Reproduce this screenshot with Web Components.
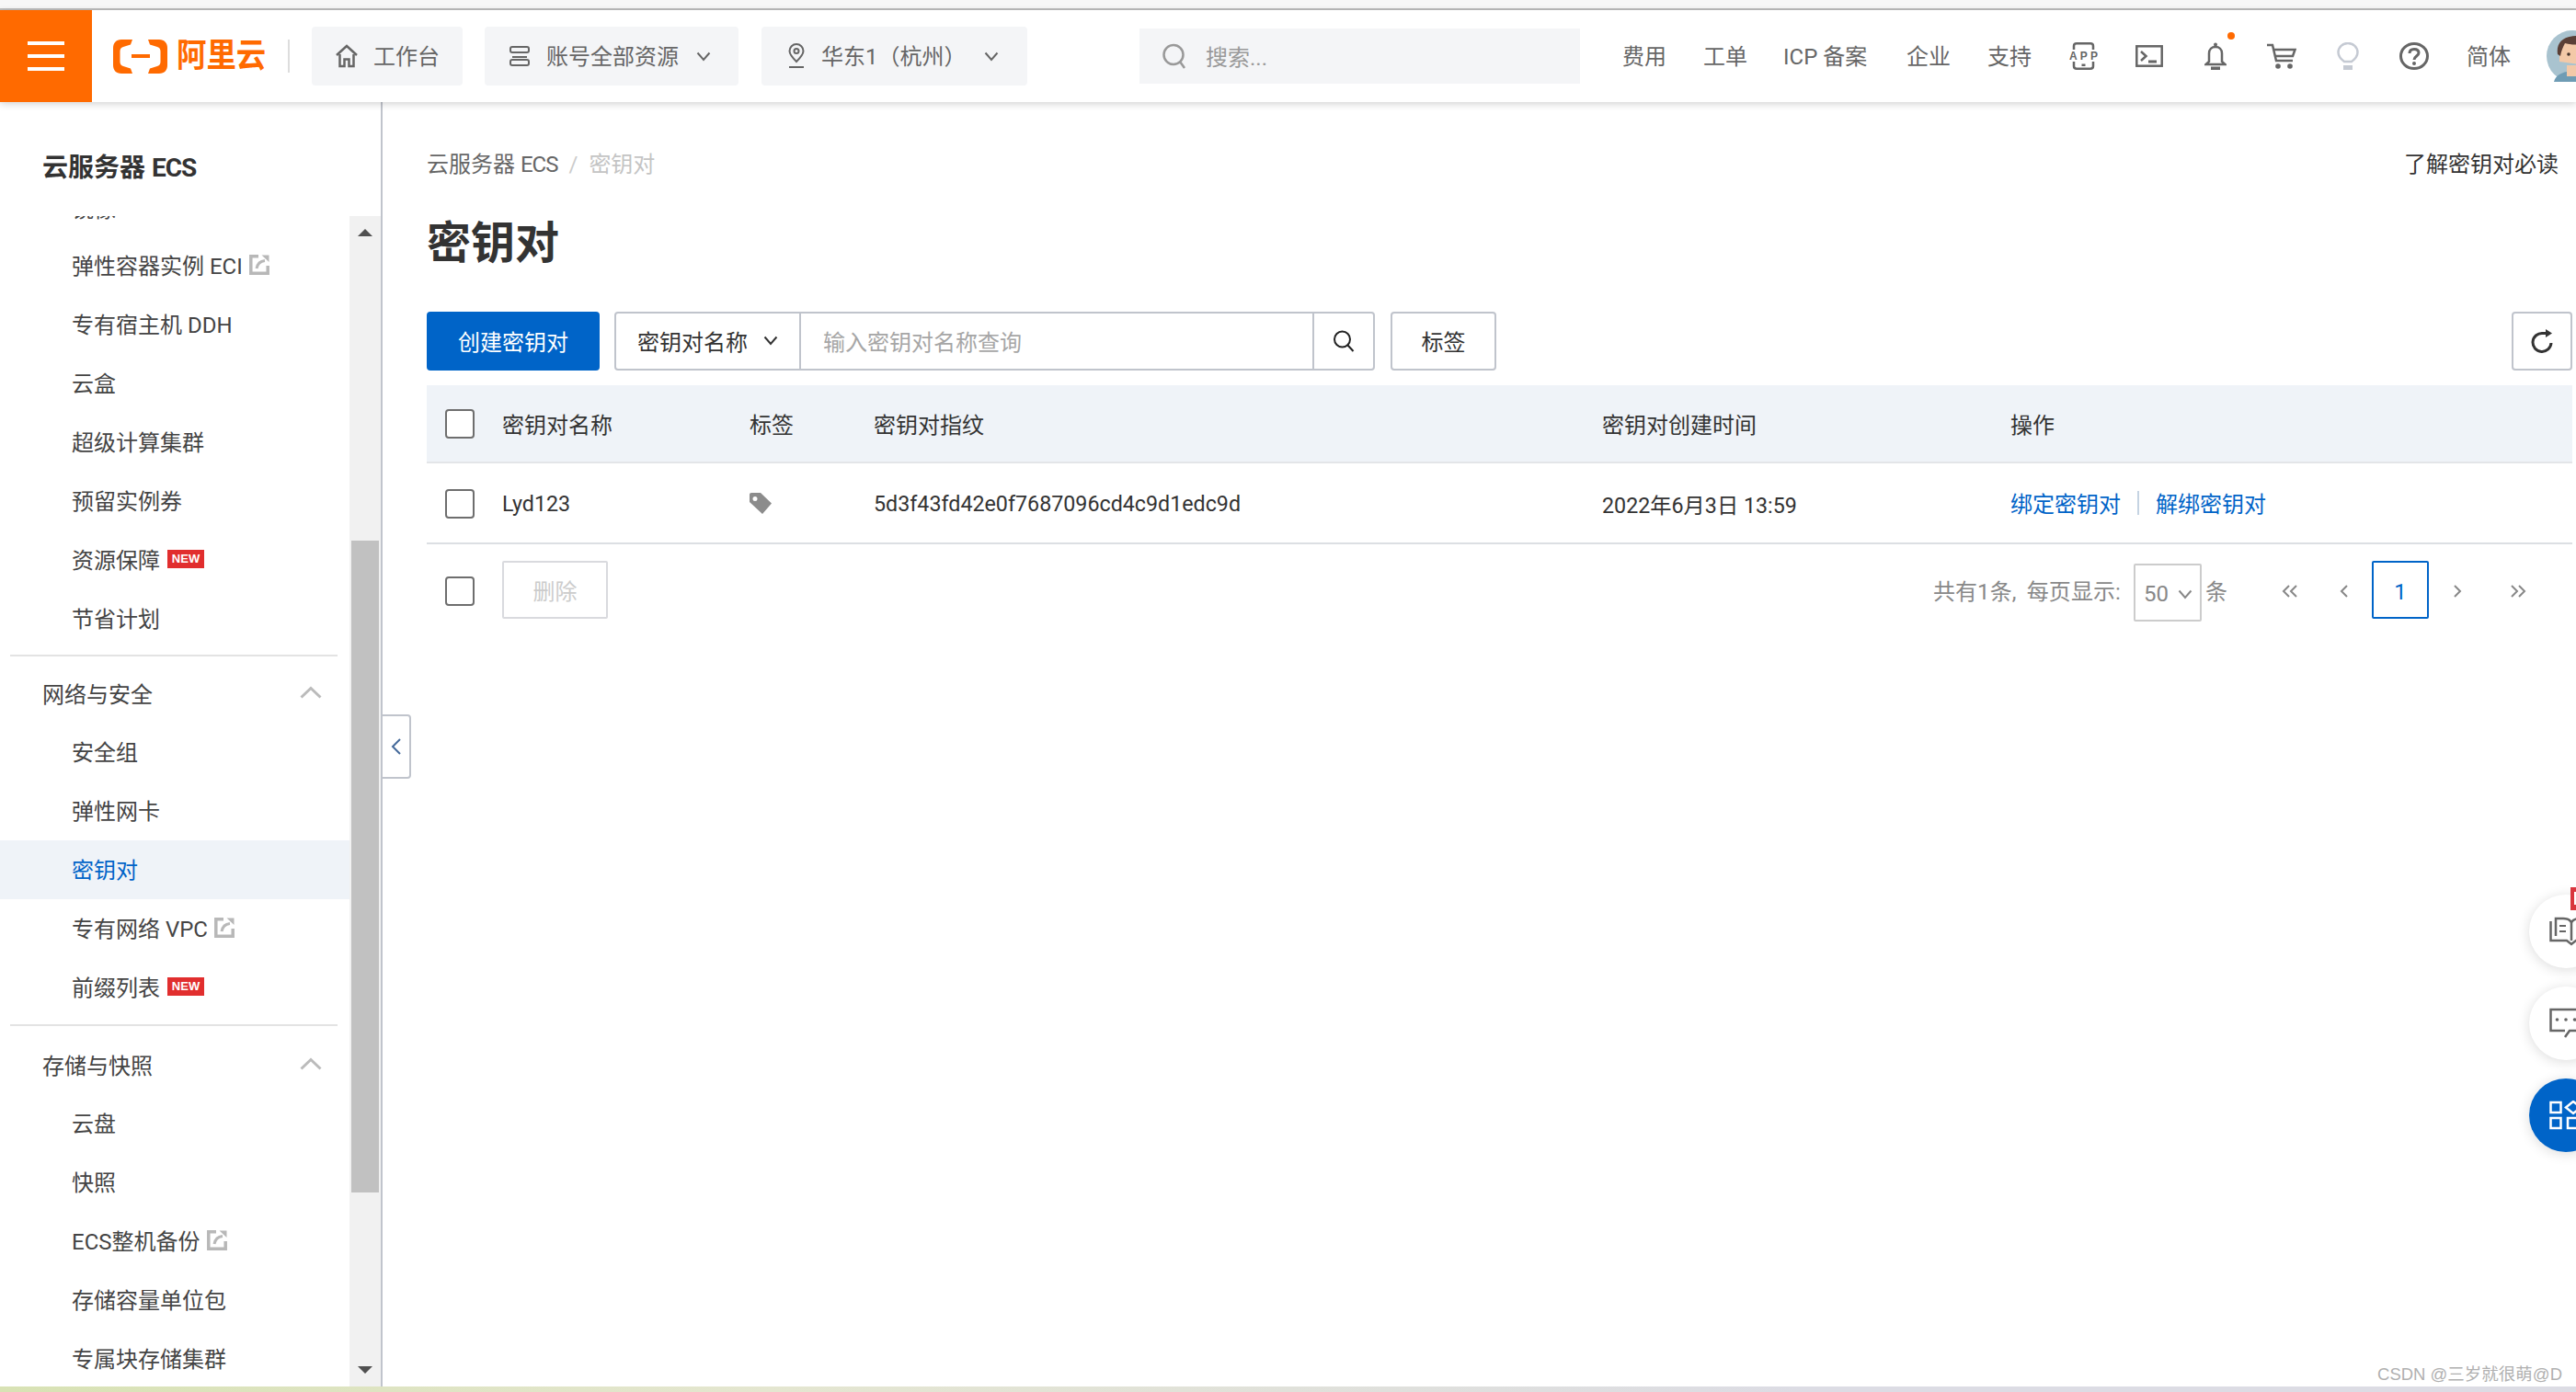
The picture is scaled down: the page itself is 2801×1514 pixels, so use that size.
<!DOCTYPE html>
<html lang="zh">
<head>
<meta charset="utf-8">
<title>密钥对</title>
<style>
  html, body { margin: 0; height: 100%; overflow: hidden; background: #fff; }
  body { font: 24px Roboto, "Noto Sans CJK SC", sans-serif; color: #333; display: flex; flex-direction: column; }
  .top-strip { flex: none; height: 9px; background: #f7f7f7; border-bottom: 2px solid #bdbdbd; }
  .shell { flex: 1; min-height: 0; display: flex; position: relative; }
  .bottom-strip { flex: none; height: 6px; background: linear-gradient(90deg, #d8e2b4, #e4e6d0 30%, #dcdce4 70%); }
</style>
</head>
<body>
<div class="top-strip"></div>
<ali-header></ali-header>
<div class="shell">
  <side-menu></side-menu>
  <collapse-handle></collapse-handle>
  <key-page></key-page>
  <float-tools></float-tools>
  <water-mark>CSDN @三岁就很萌@D</water-mark>
</div>
<div class="bottom-strip"></div>

<script>
// icons, all hand drawn to fit the reference
const icons = {
  logo: `<svg width="59" height="37" viewBox="0 0 59 37" fill="#ff6a00"><path d="M21 0H9C3 0 0 4 0 9V28C0 33 3 37 9 37H21L19 31.500 11 29C8.500 28.300 7.500 26.500 7.500 24V13C7.500 10.500 8.500 8.700 11 8L19 5.500Z"/><path d="M38 0H50C56 0 59 4 59 9V28C59 33 56 37 50 37H38L40 31.500 48 29C50.500 28.300 51.500 26.500 51.500 24V13C51.500 10.500 50.500 8.700 48 8L40 5.500Z"/><rect x="20" y="16" width="20" height="4"/></svg>`,
  home: `<svg width="24" height="26" viewBox="0 0 24 26" fill="none" stroke="#666" stroke-width="2.500"><path d="M1 12 12 2 23 12"/><path d="M4.500 11V24H9.500V16.500H14.500V24H19.500V11"/></svg>`,
  stack: `<svg width="22" height="24" viewBox="0 0 22 24" fill="none" stroke="#666" stroke-width="2"><rect x="1" y="2" width="20" height="6" rx="2"/><path d="M3 13H19"/><rect x="1" y="16" width="20" height="6" rx="2"/></svg>`,
  pin: `<svg width="20" height="28" viewBox="0 0 20 28" fill="none" stroke="#666" stroke-width="2"><path d="M10 20C5 15 2.500 12 2.500 8.500A7.500 7.500 0 0 1 17.500 8.500C17.500 12 15 15 10 20Z"/><circle cx="10" cy="8.500" r="2.500"/><path d="M2 26H18"/></svg>`,
  chev: `<svg width="16" height="11" viewBox="0 0 16 11" fill="none" stroke="#666" stroke-width="2"><path d="M1.500 1.500 8 9 14.500 1.500"/></svg>`,
  search: `<svg width="26" height="28" viewBox="0 0 26 28" fill="none" stroke="#999" stroke-width="2.500"><circle cx="12" cy="12.500" r="10.500"/><path d="M19 20 24 27"/></svg>`,
  app: `<svg width="31" height="30" viewBox="0 0 31 30" fill="none" stroke="#666" stroke-width="2.500"><path d="M5 8V4C5 2 6 1.300 8 1.300H23C25 1.300 26 2 26 4V8M5 21V26C5 28 6 28.700 8 28.700H23C25 28.700 26 28 26 26V21"/><rect x="13.500" y="23.500" width="4" height="2.500" fill="#666" stroke="none"/><text x="0" y="19" font-family="Liberation Sans" font-weight="700" font-size="12" fill="#666" stroke="none" textLength="31">APP</text></svg>`,
  term: `<svg width="30" height="24" viewBox="0 0 30 24" fill="none" stroke="#666" stroke-width="2.500"><rect x="1.300" y="1.300" width="27.400" height="21.400"/><path d="M6 7 11.500 12 6 17"/><path d="M14 18H23" stroke-width="3"/></svg>`,
  bell: `<svg width="24" height="30" viewBox="0 0 24 30" fill="none" stroke="#666" stroke-width="2.500"><circle cx="12" cy="2.500" r="2" fill="#666" stroke="none"/><path d="M5 21V12C5 7.500 8 5 12 5S19 7.500 19 12V21L22.500 24H1.500Z"/><rect x="7" y="26.500" width="10" height="3.500" fill="#666" stroke="none"/></svg>`,
  cart: `<svg width="32" height="28" viewBox="0 0 32 28" fill="none" stroke="#666" stroke-width="2.500"><path d="M0 2H6L10 19H28"/><path d="M7 7H30.500L28 14H9" /><circle cx="12" cy="25" r="2.800" fill="#666" stroke="none"/><circle cx="25" cy="25" r="2.800" fill="#666" stroke="none"/></svg>`,
  bulb: `<svg width="24" height="30" viewBox="0 0 24 30" fill="none" stroke="#c5cad3" stroke-width="2.500"><path d="M8 21C4 18 1.500 15 1.500 11A10.500 10 0 0 1 22.500 11C22.500 15 20 18 16 21Z"/><rect x="7" y="25" width="10" height="5" fill="#c5cad3" stroke="none"/></svg>`,
  help: `<svg width="32" height="30" viewBox="0 0 32 30" fill="none" stroke="#666" stroke-width="3"><ellipse cx="16" cy="15" rx="14.500" ry="13.500"/><path d="M11 12C11 9 13 7.500 16 7.500S21 9 21 11.500C21 15 16 15 16 19" stroke-width="3"/><circle cx="16" cy="23" r="2" fill="#666" stroke="none"/></svg>`,
  avatar: `<svg width="56" height="56" viewBox="0 0 56 56"><circle cx="28" cy="28" r="28" fill="#a9c3cf"/><path d="M8 56C10 48 18 44 34 44S56 50 56 56Z" fill="#6f9cb4"/><path d="M14 20C14 10 22 7 34 7S56 12 56 24V40L14 34Z" fill="#f3c9a8"/><path d="M12 26C10 12 20 6 34 6S56 10 56 16V17C44 16 28 16 20 14C18 18 16 22 15 28Z" fill="#5a3f36"/><path d="M22 38H56V50H22Z" fill="#f3c9a8"/><circle cx="24" cy="26" r="1.800" fill="#44332c"/></svg>`,
  ext: `<svg width="22" height="22" viewBox="0 0 22 22" fill="none" stroke="#b8b8b8" stroke-width="3.500"><path d="M10 1.800H1.800V20.200H20.200V12"/><path d="M8 15C9 9.500 12 7 17 6.500" stroke-width="3"/><path d="M13.500 .5H21.500V8Z" fill="#b8b8b8" stroke="none"/></svg>`,
  up: `<svg width="24" height="14" viewBox="0 0 24 14" fill="none" stroke="#bbb" stroke-width="3"><path d="M1.500 12.500 12 2.500 22.500 12.500"/></svg>`,
  refresh: `<svg width="26" height="26" viewBox="0 0 26 26" fill="none" stroke="#333" stroke-width="3"><path d="M23 15A10 10 0 1 1 14 4.500H19"/><path d="M17 0 24 4.500 17 9Z" fill="#333" stroke="none"/></svg>`,
  lens: `<svg width="24" height="26" viewBox="0 0 24 26" fill="none" stroke="#222" stroke-width="2"><circle cx="10.500" cy="11" r="8.500"/><path d="M16.500 17.500 22.500 24"/></svg>`,
  tag: `<svg width="24" height="23" viewBox="0 0 24 23" fill="#8c8c8c"><path d="M0 2C0 .8 .8 0 2 0H12L24 11.500 14 23 0 10ZM6 4A2.500 2.500 0 1 0 6 9 2.500 2.500 0 1 0 6 4Z" fill-rule="evenodd"/></svg>`,
  book: `<svg width="46" height="32" viewBox="0 0 46 32" fill="none" stroke="#666" stroke-width="2.500"><path d="M1.500 5V26H19L24 30 29 26H46"/><path d="M7 21V2H15C19 2 22 3 24 6C26 3 29 2 33 2H46"/><path d="M24 6V26"/><path d="M11 10H18M11 16H18" stroke-width="2"/></svg>`,
  chat: `<svg width="46" height="34" viewBox="0 0 46 34" fill="none" stroke="#666" stroke-width="2.500"><path d="M46 2H1.500V25H17M30 25H22L17 32"/><circle cx="8.500" cy="13" r="1.800" fill="#666" stroke="none"/><circle cx="18" cy="13" r="1.800" fill="#666" stroke="none"/><circle cx="27.500" cy="13" r="1.800" fill="#666" stroke="none"/></svg>`,
  grid: `<svg width="40" height="32" viewBox="0 0 40 32" fill="none" stroke="#fff" stroke-width="2.500"><rect x="1.500" y="2" width="11" height="11"/><rect x="1.500" y="19" width="11" height="11"/><rect x="20" y="19" width="11" height="11"/><path d="M26 1 18 7.500 26 14 34 7.500Z"/></svg>`,
  first: `<svg width="18" height="14" viewBox="0 0 18 14" fill="none" stroke="#888" stroke-width="2"><path d="M8 1 2 7 8 13M16 1 10 7 16 13"/></svg>`,
  prev: `<svg width="10" height="14" viewBox="0 0 10 14" fill="none" stroke="#888" stroke-width="2"><path d="M8 1 2 7 8 13"/></svg>`,
  next: `<svg width="10" height="14" viewBox="0 0 10 14" fill="none" stroke="#888" stroke-width="2"><path d="M2 1 8 7 2 13"/></svg>`,
  last: `<svg width="18" height="14" viewBox="0 0 18 14" fill="none" stroke="#888" stroke-width="2"><path d="M2 1 8 7 2 13M10 1 16 7 10 13"/></svg>`
};

class AliHeader extends HTMLElement {
  constructor() {
    super();
    const shadow = this.attachShadow({mode: 'open'});
    shadow.innerHTML = `
      <style>
        :host { display: flex; flex: none; height: 100px; align-items: center; background: #fff; position: relative; z-index: 2;
                box-shadow: 0 2px 8px rgba(0,0,0,.18); overflow: visible; color: #666; white-space: nowrap; }
        .burger { flex: none; width: 100px; height: 100px; background: #ff6a00; display: flex; flex-direction: column; align-items: center; justify-content: center; gap: 10px; }
        .burger i { display: block; width: 40px; height: 4px; background: #fff; }
        .logo { flex: none; margin-left: 23px; display: flex; }
        .brand { flex: none; margin-left: 10px; width: 96px; font-size: 36px; line-height: 40px; font-weight: 700; color: #ff6a00; transform: scaleX(.9); transform-origin: left center; }
        .split { flex: none; margin-left: 25px; width: 2px; height: 36px; background: #ddd; }
        .find { flex: none; margin-left: 122px; width: 479px; height: 60px; background: #f4f5f7; display: flex; align-items: center; padding-left: 25px; gap: 21px; box-sizing: border-box; color: #999; }
        .find span { padding-bottom: 2px; }
        .n { flex: none; display: flex; align-items: center; }
        .t { padding-bottom: 3px; }
        .avatar { flex: none; margin-left: 39px; height: 56px; width: 32px; overflow: hidden; }
        .dot { position: absolute; left: 2422px; top: 24px; width: 8px; height: 8px; border-radius: 50%; background: #ff6a00; }
      </style>
      <div class="burger"><i></i><i></i><i></i></div>
      <span class="logo">${icons.logo}</span>
      <span class="brand">阿里云</span>
      <span class="split"></span>
      <nav-chip icon="home" width="164" pad="26" gap="17" style="margin-left:24px">工作台</nav-chip>
      <nav-chip icon="stack" width="276" pad="27" gap="18" chev="30" style="margin-left:24px">账号全部资源</nav-chip>
      <nav-chip icon="pin" width="289" pad="28" gap="17" chev="31" style="margin-left:25px">华东1（杭州）</nav-chip>
      <div class="find">${icons.search}<span>搜索...</span></div>
      <span class="n t" style="margin-left:46px">费用</span>
      <span class="n t" style="margin-left:40px">工单</span>
      <span class="n t" style="margin-left:39px;width:95px">ICP 备案</span>
      <span class="n t" style="margin-left:39px">企业</span>
      <span class="n t" style="margin-left:40px">支持</span>
      <span class="n" style="margin-left:41px">${icons.app}</span>
      <span class="n" style="margin-left:41px">${icons.term}</span>
      <span class="n" style="margin-left:45px">${icons.bell}</span>
      <span class="n" style="margin-left:44px">${icons.cart}</span>
      <span class="n" style="margin-left:44px">${icons.bulb}</span>
      <span class="n" style="margin-left:44px">${icons.help}</span>
      <span class="n t" style="margin-left:41px">简体</span>
      <span class="avatar">${icons.avatar}</span>
      <span class="dot"></span>
    `;
  }
}

// chip of the top bar: icon, label, optional chevron
class NavChip extends HTMLElement {
  constructor() {
    super();
    this.attachShadow({mode: 'open'});
  }
  connectedCallback() {
    const chev = this.getAttribute('chev');
    this.shadowRoot.innerHTML = `
      <style>
        :host { display: flex; flex: none; align-items: center; box-sizing: border-box; height: 64px; border-radius: 4px; background: #f4f5f7; color: #666;
                width: ${this.getAttribute('width')}px; padding-left: ${this.getAttribute('pad')}px; }
        .i { display: flex; margin-right: ${this.getAttribute('gap')}px; }
        .l { padding-bottom: 3px; }
        .c { display: flex; margin-left: auto; margin-right: ${chev || 0}px; }
      </style>
      <span class="i">${icons[this.getAttribute('icon')]}</span><span class="l"><slot></slot></span>
      ${chev ? `<span class="c">${icons.chev}</span>` : ''}
    `;
  }
}

class SideItem extends HTMLElement {
  constructor() {
    super();
    this.attachShadow({mode: 'open'});
  }
  connectedCallback() {
    const active = this.hasAttribute('active');
    this.shadowRoot.innerHTML = `
      <style>
        :host { display: flex; align-items: center; box-sizing: border-box; height: 64px; padding: 0 0 3px 78px; white-space: nowrap; color: ${active ? '#0064c8' : '#444'}; background: ${active ? '#eff3f8' : 'none'}; }
        .ext { display: flex; margin-left: 7px; }
        .new { margin-left: 8px; width: 40px; height: 20px; background: #e12e2e; color: #fff; font: 700 13px/20px "Liberation Sans", sans-serif; text-align: center; }
      </style>
      <slot></slot>
      ${this.hasAttribute('ext') ? `<span class="ext">${icons.ext}</span>` : ''}
      ${this.hasAttribute('new') ? `<span class="new">NEW</span>` : ''}
    `;
  }
}

class SideGroup extends HTMLElement {
  constructor() {
    super();
    const shadow = this.attachShadow({mode: 'open'});
    shadow.innerHTML = `
      <style>
        :host { display: flex; align-items: center; box-sizing: border-box; height: 64px; padding: 0 30px 2px 46px; justify-content: space-between; color: #444; }
        span { display: flex; }
      </style>
      <slot></slot><span>${icons.up}</span>
    `;
  }
}

class SideMenu extends HTMLElement {
  constructor() {
    super();
    const shadow = this.attachShadow({mode: 'open'});
    shadow.innerHTML = `
      <style>
        :host { display: flex; flex-direction: column; flex: none; width: 416px; box-sizing: border-box; border-right: 2px solid #c0c4cc; height: 100%; }
        .head { flex: none; height: 124px; box-sizing: border-box; padding: 52px 0 0 46px; font-size: 28px; line-height: 40px; font-weight: 700; color: #333; }
        .head span { letter-spacing: -1px; }
        .body { flex: 1; min-height: 0; display: flex; overflow: hidden; }
        .list { flex: none; width: 380px; margin-top: -42px; }
        .list > side-item:first-child { padding-bottom: 0; }
        .rule { height: 2px; margin: 7px 13px 8px 11px; background: #e3e3e3; }
        .rule.b { margin: 8px 13px 10px 11px; }
        .bar { flex: none; width: 34px; background: #f1f1f1; display: flex; flex-direction: column; align-items: center; position: relative; }
        .thumb { position: absolute; left: 2px; top: 353px; width: 30px; height: 709px; background: #c1c1c1; }
        .up, .down { position: absolute; left: 9px; width: 0; height: 0; border-left: 8px solid transparent; border-right: 8px solid transparent; }
        .up { top: 14px; border-bottom: 8px solid #505050; }
        .down { bottom: 14px; border-top: 8px solid #505050; }
      </style>
      <div class="head">云服务器 <span>ECS</span></div>
      <div class="body">
        <div class="list">
          <side-item>镜像</side-item>
          <side-item ext>弹性容器实例 ECI</side-item>
          <side-item>专有宿主机 DDH</side-item>
          <side-item>云盒</side-item>
          <side-item>超级计算集群</side-item>
          <side-item>预留实例券</side-item>
          <side-item new>资源保障</side-item>
          <side-item>节省计划</side-item>
          <div class="rule"></div>
          <side-group>网络与安全</side-group>
          <side-item>安全组</side-item>
          <side-item>弹性网卡</side-item>
          <side-item active>密钥对</side-item>
          <side-item ext>专有网络 VPC</side-item>
          <side-item new>前缀列表</side-item>
          <div class="rule b"></div>
          <side-group>存储与快照</side-group>
          <side-item>云盘</side-item>
          <side-item>快照</side-item>
          <side-item ext>ECS整机备份</side-item>
          <side-item>存储容量单位包</side-item>
          <side-item>专属块存储集群</side-item>
        </div>
        <div class="bar"><i class="up"></i><i class="thumb"></i><i class="down"></i></div>
      </div>
    `;
  }
}

class CollapseHandle extends HTMLElement {
  constructor() {
    super();
    const shadow = this.attachShadow({mode: 'open'});
    shadow.innerHTML = `
      <style>
        :host { position: absolute; left: 416px; top: 666px; width: 31px; height: 70px; box-sizing: border-box; border: 2px solid #c0c4cc; border-left: 0; border-radius: 0 4px 4px 0; background: #fff; display: flex; align-items: center; justify-content: center; }
      </style>
      <svg width="11" height="18" viewBox="0 0 11 18" fill="none" stroke="#44699a" stroke-width="2"><path d="M10 1 2 9 10 17"/></svg>
    `;
  }
}

class KeyPage extends HTMLElement {
  constructor() {
    super();
    const shadow = this.attachShadow({mode: 'open'});
    shadow.innerHTML = `
      <style>
        :host { display: block; flex: 1; min-width: 0; padding: 52px 4px 0 48px; }
        .crumbs { display: flex; height: 34px; line-height: 32px; color: #666; }
        .crumbs .sep { margin: 0 12px; color: #ccc; }
        .crumbs .now { color: #c4c4c4; }
        .crumbs .read { margin-left: auto; margin-right: 15px; color: #333; }
        .crumbs b { font-weight: 400; letter-spacing: -1px; }
        h1 { margin: 34px 0 0; font-size: 48px; line-height: 68px; font-weight: 700; color: #333; }
      </style>
      <div class="crumbs"><span>云服务器 <b>ECS</b></span><span class="sep">/</span><span class="now">密钥对</span><span class="read">了解密钥对必读</span></div>
      <h1>密钥对</h1>
      <key-toolbar></key-toolbar>
      <key-table></key-table>
      <key-footer></key-footer>
    `;
  }
}

class KeyToolbar extends HTMLElement {
  constructor() {
    super();
    const shadow = this.attachShadow({mode: 'open'});
    shadow.innerHTML = `
      <style>
        :host { display: flex; height: 64px; margin-top: 40px; color: #333; }
        div { box-sizing: border-box; display: flex; align-items: center; justify-content: center; flex: none; }
        .create { width: 188px; background: #0064c8; color: #fff; border-radius: 4px; padding-bottom: 2px; }
        .combo { margin-left: 16px; width: 827px; border: 2px solid #c0c4cc; border-radius: 4px; justify-content: flex-start; }
        .pick { width: 201px; height: 100%; border-right: 2px solid #c0c4cc; justify-content: flex-start; padding: 0 0 2px 23px; gap: 17px; }
        .field { width: 558px; height: 100%; justify-content: flex-start; padding: 0 0 2px 24px; border-right: 2px solid #c0c4cc; color: #a6a6a6; }
        .lens { flex: 1; height: 100%; }
        .tag { margin-left: 17px; width: 115px; border: 2px solid #c0c4cc; border-radius: 4px; padding-bottom: 2px; }
        .again { margin-left: auto; width: 66px; border: 2px solid #c0c4cc; border-radius: 4px; }
        svg { display: block; }
      </style>
      <div class="create">创建密钥对</div>
      <div class="combo">
        <div class="pick"><span>密钥对名称</span>${icons.chev.replaceAll('#666', '#333')}</div>
        <div class="field">输入密钥对名称查询</div>
        <div class="lens">${icons.lens}</div>
      </div>
      <div class="tag">标签</div>
      <div class="again">${icons.refresh}</div>
    `;
  }
}

// small square checkbox used in the table and its footer
class KeyCheck extends HTMLElement {
  constructor() {
    super();
    const shadow = this.attachShadow({mode: 'open'});
    shadow.innerHTML = `
      <style>
        :host { display: block; flex: none; width: 32px; height: 32px; box-sizing: border-box; border: 2px solid #6e6e6e; border-radius: 4px; background: #fff; }
      </style>
    `;
  }
}

class KeyTable extends HTMLElement {
  constructor() {
    super();
    const shadow = this.attachShadow({mode: 'open'});
    shadow.innerHTML = `
      <style>
        :host { display: block; margin-top: 16px; color: #333; }
        .row { display: grid; grid-template-columns: 82px 269px 135px 792px 444px 1fr; align-items: center; box-sizing: border-box; white-space: nowrap; }
        .head { height: 85px; background: #eff3f8; border-bottom: 2px solid #e3e5e8; }
        .line { height: 88px; border-bottom: 2px solid #dcdfe3; }
        key-check { margin-left: 20px; }
        .line key-check { margin-top: 2px; }
        .tag { display: flex; }
        .ops { display: flex; align-items: center; color: #0064c8; padding-bottom: 1px; }
        .ops i { display: block; width: 2px; height: 26px; background: #c5d3e2; margin: 0 18px; }
        .num { font-size: 23.250px; padding-top: 2px; }
      </style>
      <div class="row head"><key-check></key-check><span>密钥对名称</span><span>标签</span><span>密钥对指纹</span><span>密钥对创建时间</span><span>操作</span></div>
      <div class="row line"><key-check></key-check><span class="num">Lyd123</span><span class="tag">${icons.tag}</span><span class="num">5d3f43fd42e0f7687096cd4c9d1edc9d</span><span class="num">2022年6月3日 13:59</span><span class="ops">绑定密钥对<i></i>解绑密钥对</span></div>
    `;
  }
}

class KeyFooter extends HTMLElement {
  constructor() {
    super();
    const shadow = this.attachShadow({mode: 'open'});
    shadow.innerHTML = `
      <style>
        :host { display: flex; align-items: center; height: 64px; margin-top: 17px; color: #888; white-space: nowrap; }
        key-check { margin: 3px 0 0 20px; }
        .del { box-sizing: border-box; margin-left: 30px; width: 115px; height: 63px; border: 2px solid #d9dade; border-radius: 2px; color: #ccc; display: flex; align-items: center; justify-content: center; }
        .pager { margin-left: auto; margin-right: 24px; display: flex; align-items: center; }
        .say { word-spacing: 5px; letter-spacing: .1px; }
        .size { box-sizing: border-box; margin: 6px 4px 0 14px; width: 74px; height: 63px; border: 2px solid #ccc; border-radius: 2px; display: flex; align-items: center; padding: 4px 0 0 9px; gap: 10px; }
        .b { width: 60px; display: flex; justify-content: center; padding-top: 4px; }
        .b.now { box-sizing: border-box; width: 62px; height: 63px; border: 2px solid #0064c8; border-radius: 2px; color: #0064c8; align-items: center; padding-top: 5px; }
      </style>
      <key-check></key-check>
      <div class="del">删除</div>
      <div class="pager">
        <span class="say">共有1条, 每页显示:</span>
        <div class="size"><span>50</span>${icons.chev.replaceAll('#666', '#888')}</div>
        <span style="margin-right:39px">条</span>
        <span class="b" style="width:58px">${icons.first}</span><span class="b">${icons.prev}</span><span class="b now">1</span><span class="b" style="width:62px">${icons.next}</span><span class="b" style="width:70px">${icons.last}</span>
      </div>
    `;
  }
}

class FloatTools extends HTMLElement {
  constructor() {
    super();
    const shadow = this.attachShadow({mode: 'open'});
    shadow.innerHTML = `
      <style>
        :host { position: absolute; left: 2750px; top: 862px; width: 80px; display: flex; flex-direction: column; gap: 20px; }
        div { position: relative; width: 80px; height: 80px; border-radius: 50%; background: #fff; box-shadow: 0 2px 14px rgba(0,0,0,.14); display: flex; align-items: center; padding-left: 22px; box-sizing: border-box; }
        .blue { background: #0064c8; }
        .flag { position: absolute; left: 45px; top: -8px; width: 14px; height: 25px; background: #d9363e; }
        .flag::after { content: ""; position: absolute; left: 4px; top: 5px; width: 4px; height: 14px; background: #fff; }
      </style>
      <div>${icons.book}<i class="flag"></i></div>
      <div>${icons.chat}</div>
      <div class="blue">${icons.grid}</div>
    `;
  }
}

class WaterMark extends HTMLElement {
  constructor() {
    super();
    const shadow = this.attachShadow({mode: 'open'});
    shadow.innerHTML = `
      <style>
        :host { position: absolute; right: 15px; bottom: 0; font: 18.500px/26px "Liberation Sans", "Noto Sans CJK SC", sans-serif; color: #b0b0b0; white-space: nowrap; }
      </style>
      <slot></slot>
    `;
  }
}

customElements.define('nav-chip', NavChip);
customElements.define('ali-header', AliHeader);
customElements.define('side-item', SideItem);
customElements.define('side-group', SideGroup);
customElements.define('side-menu', SideMenu);
customElements.define('collapse-handle', CollapseHandle);
customElements.define('key-check', KeyCheck);
customElements.define('key-toolbar', KeyToolbar);
customElements.define('key-table', KeyTable);
customElements.define('key-footer', KeyFooter);
customElements.define('key-page', KeyPage);
customElements.define('float-tools', FloatTools);
customElements.define('water-mark', WaterMark);
</script>
</body>
</html>
